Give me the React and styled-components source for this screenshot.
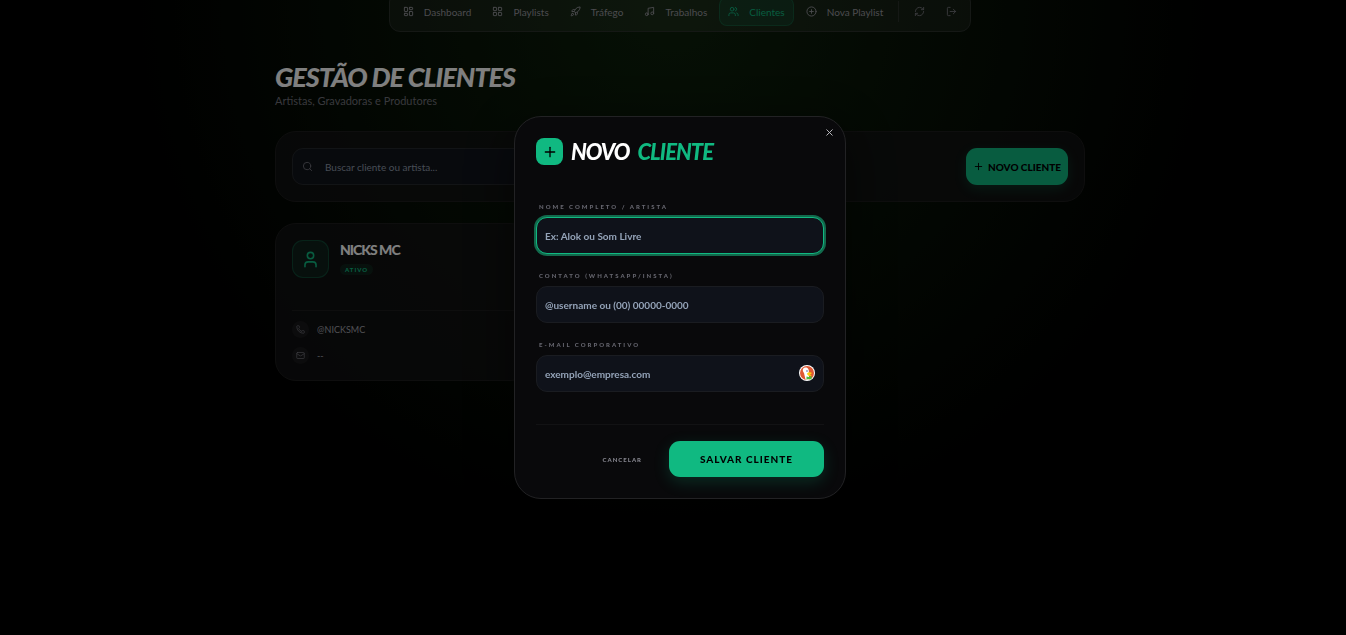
import React from "react";
import styled, { createGlobalStyle, css } from "styled-components";
import {
  LayoutDashboard,
  LayoutGrid,
  LogOut,
  Mail,
  Music,
  Phone,
  Plus,
  CirclePlus,
  RefreshCw,
  Rocket,
  Search,
  User,
  Users,
  X,
} from "lucide-react";

const links = [
  { label: "Dashboard", icon: LayoutDashboard },
  { label: "Playlists", icon: LayoutGrid },
  { label: "Tráfego", icon: Rocket },
  { label: "Trabalhos", icon: Music },
  { label: "Clientes", icon: Users, active: true },
  { label: "Nova Playlist", icon: CirclePlus },
];

const clients = [{ name: "NICKS MC", status: "ATIVO", contact: "@NICKSMC", email: "--" }];

const DuckIcon = () => (
  <svg width="16" height="16" viewBox="0 0 32 32" aria-hidden="true">
    <circle cx="16" cy="16" r="16" fill="#fff" />
    <circle cx="16" cy="16" r="14" fill="#de5833" />
    <path
      d="M8 8c3-4 9-4 11 1 1 3 1 5 0 8l2 12c-3 1-6 1-8 0l-3-13c-2-3-3-5-2-8z"
      fill="#fff"
    />
    <circle cx="16" cy="12" r="1.5" fill="#2d4f8e" />
    <path d="M16 17c3-3 7-3 10-1-1 2-4 2-5 3 2 1 4 0 4 2-3 2-9 0-9-4z" fill="#fdd20a" />
    <path d="M15 23l4 1 6-2v7l-5-1-5 1z" fill="#4cba3c" />
  </svg>
);

const ClientCard = ({ client }) => (
  <Card>
    <CardHead>
      <Avatar>
        <User size={19} />
      </Avatar>
      <div>
        <ClientName>{client.name}</ClientName>
        <Badge>{client.status}</Badge>
      </div>
    </CardHead>
    <ContactList>
      <li>
        <ContactIcon>
          <Phone size={9} />
        </ContactIcon>
        {client.contact}
      </li>
      <li>
        <ContactIcon>
          <Mail size={9} />
        </ContactIcon>
        {client.email}
      </li>
    </ContactList>
  </Card>
);

const NewClientDialog = () => (
  <Backdrop>
    <Dialog role="dialog" aria-modal="true" aria-labelledby="dialog-title">
      <CloseButton type="button" aria-label="Fechar">
        <X size={11} />
      </CloseButton>
      <DialogHead>
        <DialogIcon>
          <Plus size={16} />
        </DialogIcon>
        <DialogTitle id="dialog-title">
          <span>NOVO</span>
          <em>CLIENTE</em>
        </DialogTitle>
      </DialogHead>
      <form>
        <Fields>
          <Field>
            <label htmlFor="name">NOME COMPLETO / ARTISTA</label>
            <Input id="name" type="text" placeholder="Ex: Alok ou Som Livre" $focused />
          </Field>
          <Field>
            <label htmlFor="contact">CONTATO (WHATSAPP/INSTA)</label>
            <Input id="contact" type="text" placeholder="@username ou (00) 00000-0000" />
          </Field>
          <Field>
            <label htmlFor="email">E-MAIL CORPORATIVO</label>
            <InputWrap>
              <Input id="email" type="email" placeholder="exemplo@empresa.com" />
              <InputBadge>
                <DuckIcon />
              </InputBadge>
            </InputWrap>
          </Field>
        </Fields>
        <Actions>
          <CancelButton type="button">CANCELAR</CancelButton>
          <SaveButton type="button">SALVAR CLIENTE</SaveButton>
        </Actions>
      </form>
    </Dialog>
  </Backdrop>
);

const App = () => {
  return (
    <>
      <GlobalStyle />
      <Page>
        <Nav>
          {links.map(({ label, icon: Icon, active }) => (
            <NavLink href="#" key={label} $active={active}>
              <Icon size={11} />
              {label}
            </NavLink>
          ))}
          <NavDivider />
          <NavButton type="button" aria-label="Atualizar">
            <RefreshCw size={11} />
          </NavButton>
          <NavButton type="button" aria-label="Sair">
            <LogOut size={11} />
          </NavButton>
        </Nav>
        <Main>
          <Title>GESTÃO DE CLIENTES</Title>
          <Subtitle>Artistas, Gravadoras e Produtores</Subtitle>
          <Toolbar>
            <SearchBox>
              <Search size={11} />
              <input type="search" aria-label="Buscar" placeholder="Buscar cliente ou artista..." />
            </SearchBox>
            <NewButton type="button">
              <Plus size={11} />
              NOVO CLIENTE
            </NewButton>
          </Toolbar>
          <Grid>
            {clients.map((client) => (
              <ClientCard client={client} key={client.name} />
            ))}
          </Grid>
        </Main>
      </Page>
      <NewClientDialog />
    </>
  );
};

export default App;

const GlobalStyle = createGlobalStyle`
  * {
    box-sizing: border-box;
  }

  body {
    margin: 0;
    background: #000;
    color: #fff;
    font-family: Lato, "Open Sans", sans-serif;
    font-size: 10px;
    overflow: hidden;
  }

  button,
  input {
    font-family: inherit;
    margin: 0;
  }

  button {
    border: 0;
    padding: 0;
    cursor: pointer;
  }
`;

const Page = styled.div`
  min-height: 100vh;
  padding: 0 0 20px 14px;
  display: flex;
  flex-direction: column;
  align-items: center;
  background: radial-gradient(circle at 50% 0, #0d210b 0, #000 550px);
`;

const Nav = styled.nav`
  display: flex;
  align-items: center;
  gap: 3px;
  height: 41px;
  margin-top: -9px;
  padding: 0 4px;
  border: 1px solid #2a302b;
  border-radius: 11px;
  background: rgba(255, 255, 255, 0.06);
`;

const NavLink = styled.a`
  display: flex;
  align-items: center;
  gap: 10px;
  height: 29px;
  padding: 0 8px;
  border: 1px solid transparent;
  border-radius: 8px;
  color: #96969d;
  text-decoration: none;

  ${(props) =>
    props.$active &&
    css`
      color: #10b981;
      background: rgba(16, 185, 129, 0.12);
      border-color: rgba(16, 185, 129, 0.22);
    `}
`;

const NavDivider = styled.span`
  width: 1px;
  height: 21px;
  margin: 0 3px;
  background: #2a302b;
`;

const NavButton = styled.button`
  display: flex;
  align-items: center;
  justify-content: center;
  width: 29px;
  height: 27px;
  background: none;
  color: #74747b;
`;

const Main = styled.main`
  width: 100%;
  max-width: 810px;
`;

const Title = styled.h1`
  margin: 30px 0 0;
  font-size: 27px;
  line-height: 29px;
  font-weight: 900;
  font-style: italic;
  letter-spacing: -1px;
`;

const Subtitle = styled.p`
  margin: 2px 0 0;
  font-size: 11px;
  line-height: 16px;
  color: #71717a;
`;

const panel = css`
  border: 1px solid #1c1c1c;
  border-radius: 21px;
  background: rgba(20, 20, 22, 0.75);
`;

const Toolbar = styled.section`
  ${panel}
  display: flex;
  align-items: center;
  justify-content: space-between;
  margin-top: 22px;
  padding: 16px;
`;

const SearchBox = styled.div`
  display: flex;
  align-items: center;
  gap: 12px;
  flex: 0 1 300px;
  height: 37px;
  padding: 0 9px;
  border: 1px solid #25282c;
  border-radius: 11px;
  background: #10141b;
  color: #71717a;

  input {
    flex: 1;
    min-width: 0;
    padding: 0;
    border: 0;
    outline: 0;
    background: none;
    color: #fff;
    font-size: 10px;
  }

  input::placeholder {
    color: #8f99a8;
  }
`;

const NewButton = styled.button`
  display: flex;
  align-items: center;
  justify-content: center;
  gap: 4px;
  width: 102px;
  height: 37px;
  border-radius: 11px;
  background: #10b981;
  box-shadow: 0 4px 12px rgba(16, 185, 129, 0.2);
  color: #000;
  font-size: 10px;
  font-weight: 900;
  white-space: nowrap;
`;

const Grid = styled.section`
  display: grid;
  grid-template-columns: repeat(3, 1fr);
  gap: 21px;
  margin-top: 21px;
`;

const Card = styled.article`
  ${panel}
  padding: 16px;
`;

const CardHead = styled.header`
  display: flex;
  gap: 11px;
  height: 70px;
`;

const Avatar = styled.div`
  display: flex;
  align-items: center;
  justify-content: center;
  width: 37px;
  height: 38px;
  border: 1px solid rgba(16, 185, 129, 0.25);
  border-radius: 11px;
  background: rgba(16, 185, 129, 0.1);
  color: #10b981;
`;

const ClientName = styled.h2`
  margin: 0 0 4px;
  font-size: 14px;
  line-height: 20px;
  font-weight: 900;
  letter-spacing: -1px;
`;

const Badge = styled.span`
  display: block;
  width: fit-content;
  padding: 0 5px;
  border-radius: 6px;
  background: rgba(16, 185, 129, 0.1);
  color: #10b981;
  font-size: 6px;
  line-height: 11px;
  font-weight: 900;
  letter-spacing: 1px;
`;

const ContactList = styled.ul`
  display: grid;
  gap: 9px;
  margin: 0;
  padding: 10px 0 0;
  border-top: 1px solid #1c1c1c;
  list-style: none;
  font-size: 9px;
  color: #a1a1aa;

  li {
    display: flex;
    align-items: center;
    gap: 8px;
  }
`;

const ContactIcon = styled.span`
  display: flex;
  align-items: center;
  justify-content: center;
  width: 17px;
  height: 17px;
  border-radius: 50%;
  background: #19191b;
  color: #71717a;
`;

const Backdrop = styled.div`
  position: fixed;
  inset: 0;
  display: flex;
  align-items: center;
  justify-content: center;
  padding: 0 0 20px 14px;
  background: rgba(0, 0, 0, 0.5);
`;

const Dialog = styled.section`
  position: relative;
  width: 100%;
  max-width: 332px;
  padding: 21px;
  border: 1px solid #222224;
  border-radius: 27px;
  background: #09090b;
  box-shadow: 0 12px 50px rgba(0, 0, 0, 0.5);
`;

const CloseButton = styled.button`
  position: absolute;
  top: 10px;
  right: 10px;
  display: flex;
  background: none;
  color: #c4c4c8;
`;

const DialogHead = styled.header`
  display: flex;
  align-items: center;
  gap: 8px;
`;

const DialogIcon = styled.span`
  display: flex;
  align-items: center;
  justify-content: center;
  width: 27px;
  height: 27px;
  border-radius: 8px;
  background: #10b981;
  color: #000;
`;

const DialogTitle = styled.h2`
  display: flex;
  gap: 8px;
  margin: 0;
  font-size: 22px;
  line-height: 27px;
  font-weight: 900;
  font-style: italic;
  letter-spacing: -1px;

  em {
    color: #10b981;
  }
`;

const Fields = styled.div`
  display: grid;
  gap: 16px;
  margin-top: 36px;
`;

const Field = styled.div`
  label {
    display: block;
    margin: 0 0 5px 3px;
    color: #66666f;
    font-size: 6px;
    line-height: 11px;
    font-weight: 900;
    letter-spacing: 2px;
  }
`;

const Input = styled.input`
  display: block;
  width: 100%;
  height: 37px;
  padding: 0 8px;
  border: 1px solid #1a1c21;
  border-radius: 11px;
  outline: 0;
  background: #0f121a;
  color: #fff;
  font-size: 10px;
  font-weight: 700;

  &::placeholder {
    color: #94a3b8;
  }

  ${(props) =>
    props.$focused &&
    css`
      border-color: #10b981;
      box-shadow: 0 0 0 2px #12694c;
    `}
`;

const InputWrap = styled.div`
  position: relative;
`;

const InputBadge = styled.span`
  position: absolute;
  top: 10px;
  right: 9px;
  display: flex;
`;

const Actions = styled.footer`
  display: flex;
  align-items: center;
  justify-content: flex-end;
  gap: 27px;
  margin-top: 32px;
  padding-top: 16px;
  border-top: 1px solid #121214;
`;

const CancelButton = styled.button`
  background: none;
  color: #85858e;
  font-size: 6px;
  font-weight: 900;
  letter-spacing: 1px;
`;

const SaveButton = styled.button`
  width: 155px;
  height: 36px;
  border-radius: 11px;
  background: #10b981;
  box-shadow: 0 5px 16px rgba(16, 185, 129, 0.2);
  color: #000;
  font-size: 10px;
  font-weight: 900;
  letter-spacing: 1px;
`;
